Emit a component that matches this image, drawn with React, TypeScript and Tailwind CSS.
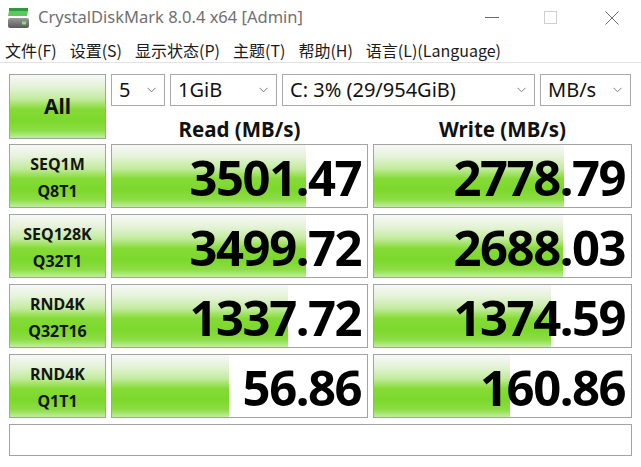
import React from "react";

const GREEN =
  "bg-[linear-gradient(to_bottom,#f7f8f6_0%,#e6f3da_18%,#c3eb9f_38%,#86db37_54%,#7cd82b_72%,#8ddd45_88%,#bfeea0_100%)]";

const rows = [
  { a: "SEQ1M", b: "Q8T1", read: 3501.47, write: 2778.79 },
  { a: "SEQ128K", b: "Q32T1", read: 3499.72, write: 2688.03 },
  { a: "RND4K", b: "Q32T16", read: 1337.72, write: 1374.59 },
  { a: "RND4K", b: "Q1T1", read: 56.86, write: 160.86 },
];

const menu = ["文件(F)", "设置(S)", "显示状态(P)", "主题(T)", "帮助(H)", "语言(L)(Language)"];

// log-scaled meter, as CrystalDiskMark draws it
const barWidth = (v: number) => Math.round(43 * Math.log10(v) + 41.6);

const Chevron = () => (
  <svg width="9" height="6" viewBox="0 0 9 6" className="shrink-0">
    <path d="M0.5 0.8 L4.5 4.8 L8.5 0.8" fill="none" stroke="#7a7a7a" strokeWidth="1" />
  </svg>
);

const Select = ({ value, w }: { value: string; w: string }) => (
  <div className={`${w} h-[32px] border border-[#a9a9a9] bg-white flex items-center justify-between pl-[7px] pr-[8px]`}>
    <span className="text-[20px] text-[#111]">{value}</span>
    <Chevron />
  </div>
);

const Meter = ({ value }: { value: number }) => (
  <div className="relative h-full border border-[#a3a3a3] bg-white flex items-center justify-end pr-[6px] overflow-hidden">
    <div className={`absolute left-0 top-0 bottom-0 ${GREEN}`} style={{ width: barWidth(value) }} />
    <span className="relative pt-[2px] text-[49px] font-bold leading-none tracking-[-1.5px] text-black">
      {value.toFixed(2)}
    </span>
  </div>
);

const AppIcon = () => (
  <svg width="21" height="20" viewBox="0 0 21 20">
    <defs>
      <linearGradient id="bot" x1="0" y1="0" x2="0" y2="1">
        <stop offset="0" stopColor="#9a9a9a" />
        <stop offset="1" stopColor="#5a5a5a" />
      </linearGradient>
    </defs>
    <path d="M1 0 H20 V3 H1 Z" fill="#2f9a3b" />
    <path d="M1 3 H20 L19 8 H0 Z" fill="#5cc95c" />
    <rect x="0" y="10" width="21" height="10" rx="2" fill="url(#bot)" />
    <rect x="14" y="13.5" width="4" height="3" fill="#8ee06a" />
  </svg>
);

export default function App() {
  return (
    <div className="w-[641px] h-[467px] bg-white overflow-hidden font-['Noto_Sans','Noto_Sans_CJK_SC',sans-serif] text-[#111]">
      {/* title bar */}
      <div className="h-[35px] flex items-center">
        <div className="pl-[8px] pr-[9px] flex items-center">
          <AppIcon />
        </div>
        <span className="text-[16.5px] text-[#707070]">CrystalDiskMark 8.0.4 x64 [Admin]</span>
        <div className="ml-auto flex items-center h-full">
          <div className="w-[46px] flex justify-center mr-[12px]">
            <div className="w-[14px] h-px bg-[#6b6b6b]" />
          </div>
          <div className="w-[46px] flex justify-center mr-[16px]">
            <div className="w-[13px] h-[13px] border border-[#cfcfcf]" />
          </div>
          <div className="w-[46px] flex justify-center mr-[6px]">
            <svg width="14" height="14" viewBox="0 0 14 14">
              <path d="M0.5 0.5 L13.5 13.5 M13.5 0.5 L0.5 13.5" stroke="#6b6b6b" strokeWidth="1" />
            </svg>
          </div>
        </div>
      </div>

      {/* menu bar */}
      <div className="h-[28px] flex items-center gap-[13px] pl-[5px] pt-[3px] border-b border-[#e3e3e3] font-['Noto_Sans_CJK_SC',sans-serif] text-[16px] text-[#1a1a1a]">
        {menu.map((m) => (
          <span key={m}>{m}</span>
        ))}
      </div>

      {/* main panel */}
      <div className="pl-[9px] pt-[11px] flex flex-col gap-[5px] w-[632px]">
        <div className="flex gap-[5px] h-[65px]">
          <div className={`w-[97px] shrink-0 border border-[#a3a3a3] ${GREEN} flex items-center justify-center`}>
            <span className="text-[21px] font-bold">All</span>
          </div>
          <div className="flex-1 flex flex-col">
            <div className="flex gap-[5px]">
              <Select value="5" w="w-[54px]" />
              <Select value="1GiB" w="w-[107px]" />
              <Select value="C: 3% (29/954GiB)" w="w-[253px]" />
              <Select value="MB/s" w="w-[91px]" />
            </div>
            <div className="flex-1 flex gap-[5px] items-end">
              <div className="w-[257px] text-center text-[20.5px] font-bold leading-none">Read (MB/s)</div>
              <div className="w-[259px] text-center text-[20.5px] font-bold leading-none">Write (MB/s)</div>
            </div>
          </div>
        </div>

        <div className="flex flex-col gap-[6px]">
          {rows.map((r, i) => (
            <div key={i} className="flex gap-[5px] h-[64px]">
              <div className={`w-[97px] shrink-0 border border-[#a3a3a3] ${GREEN} flex flex-col items-center justify-center pt-[3px]`}>
                <span className="text-[16px] font-bold leading-[27px] text-[#151515]">{r.a}</span>
                <span className="text-[16px] font-bold leading-[27px] text-[#151515]">{r.b}</span>
              </div>
              <div className="w-[257px] shrink-0">
                <Meter value={r.read} />
              </div>
              <div className="w-[259px] shrink-0">
                <Meter value={r.write} />
              </div>
            </div>
          ))}
        </div>

        <div className="h-[32px] mt-[1px] border border-[#a3a3a3] bg-white" />
      </div>
    </div>
  );
}
